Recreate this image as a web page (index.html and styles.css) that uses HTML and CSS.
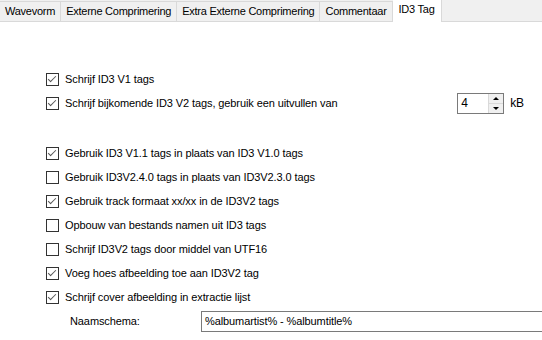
FILE: index.html
```html
<!DOCTYPE html>
<html lang="nl">
<head>
  <meta charset="UTF-8">
  <title>ID3 Tag</title>
  <link rel="stylesheet" href="styles.css">
</head>
<body>
  <div class="tabs">
    <div class="tab">Wavevorm</div>
    <div class="tab">Externe Comprimering</div>
    <div class="tab">Extra Externe Comprimering</div>
    <div class="tab">Commentaar</div>
    <div class="tab active">ID3 Tag</div>
  </div>

  <div class="panel">
    <div class="group">
      <div class="row"><span class="box checked"></span>Schrijf ID3 V1 tags</div>
      <div class="row">
        <span class="box checked"></span>Schrijf bijkomende ID3 V2 tags, gebruik een uitvullen van
        <div class="spin">
          <span class="spin-value">4</span>
          <span class="spin-btns">
            <span class="arrow up"></span>
            <span class="arrow down"></span>
          </span>
        </div>
        <span class="unit">kB</span>
      </div>
    </div>

    <div class="group second">
      <div class="row"><span class="box checked"></span>Gebruik ID3 V1.1 tags in plaats van ID3 V1.0 tags</div>
      <div class="row"><span class="box"></span>Gebruik ID3V2.4.0 tags in plaats van ID3V2.3.0 tags</div>
      <div class="row"><span class="box checked"></span>Gebruik track formaat xx/xx in de ID3V2 tags</div>
      <div class="row"><span class="box"></span>Opbouw van bestands namen uit ID3 tags</div>
      <div class="row"><span class="box"></span>Schrijf ID3V2 tags door middel van UTF16</div>
      <div class="row"><span class="box checked"></span>Voeg hoes afbeelding toe aan ID3V2 tag</div>
      <div class="row"><span class="box checked"></span>Schrijf cover afbeelding in extractie lijst</div>
      <div class="row name-row">
        <span class="label">Naamschema:</span>
        <div class="textbox">%albumartist% - %albumtitle%</div>
      </div>
    </div>
  </div>
</body>
</html>
```

FILE: styles.css
```css
body {
  margin: 0;
  background: #ffffff;
  font-family: "Liberation Sans", Arial, sans-serif;
  font-size: 11px;
  letter-spacing: -0.1px;
  color: #000000;
  overflow: hidden;
}
.tabs {
  display: flex;
  align-items: flex-end;
  height: 22px;
  background: #f0f0f0;
  border-bottom: 1px solid #d9d9d9;
  box-sizing: border-box;
}
.tab {
  height: 20px;
  line-height: 19px;
  padding: 0 5px;
  font-size: 11px;
  letter-spacing: -0.25px;
  background: #f0f0f0;
  border-right: 1px solid #d9d9d9;
  border-top: 1px solid #d9d9d9;
  box-sizing: border-box;
}
.tab.active {
  height: 23px;
  margin-bottom: -1px;
  background: #ffffff;
  line-height: 19px;
  padding: 0 6px;
}
.panel {
  padding: 45px 0 0 46px;
}
.group.second {
  margin-top: 26px;
}
.row {
  display: flex;
  align-items: center;
  height: 24px;
  white-space: nowrap;
}
.box {
  width: 13px;
  height: 13px;
  border: 1px solid #333333;
  box-sizing: border-box;
  margin-right: 6px;
  position: relative;
  background: #ffffff;
}
.box.checked::after {
  content: "";
  position: absolute;
  left: 3px;
  top: 0px;
  width: 3px;
  height: 7px;
  border-right: 1.5px solid #555555;
  border-bottom: 1.5px solid #555555;
  transform: rotate(45deg);
}
.spin {
  display: flex;
  margin-left: auto;
  width: 47px;
  height: 21px;
  border: 1px solid #7a7a7a;
  box-sizing: border-box;
  background: #ffffff;
}
.spin-value {
  flex: 1;
  padding-left: 3px;
  line-height: 19px;
  font-size: 12px;
}
.spin-btns {
  display: flex;
  flex-direction: column;
  width: 14px;
  background: #f0f0f0;
  border-left: 1px solid #d9d9d9;
}
.arrow {
  flex: 1;
  display: flex;
  align-items: center;
  justify-content: center;
}
.arrow::before {
  content: "";
  border-left: 3px solid transparent;
  border-right: 3px solid transparent;
}
.arrow.up::before {
  border-bottom: 3px solid #000000;
}
.arrow.down::before {
  border-top: 3px solid #000000;
}
.arrow.up {
  border-bottom: 1px solid #d9d9d9;
}
.unit {
  margin-left: 6px;
  margin-right: 18px;
  font-size: 12px;
}
.name-row {
  padding-left: 24px;
}
.label {
  width: 131px;
}
.textbox {
  flex: 1;
  height: 21px;
  line-height: 19px;
  border: 1px solid #7a7a7a;
  border-right: none;
  box-sizing: border-box;
  padding-left: 3px;
}
```
